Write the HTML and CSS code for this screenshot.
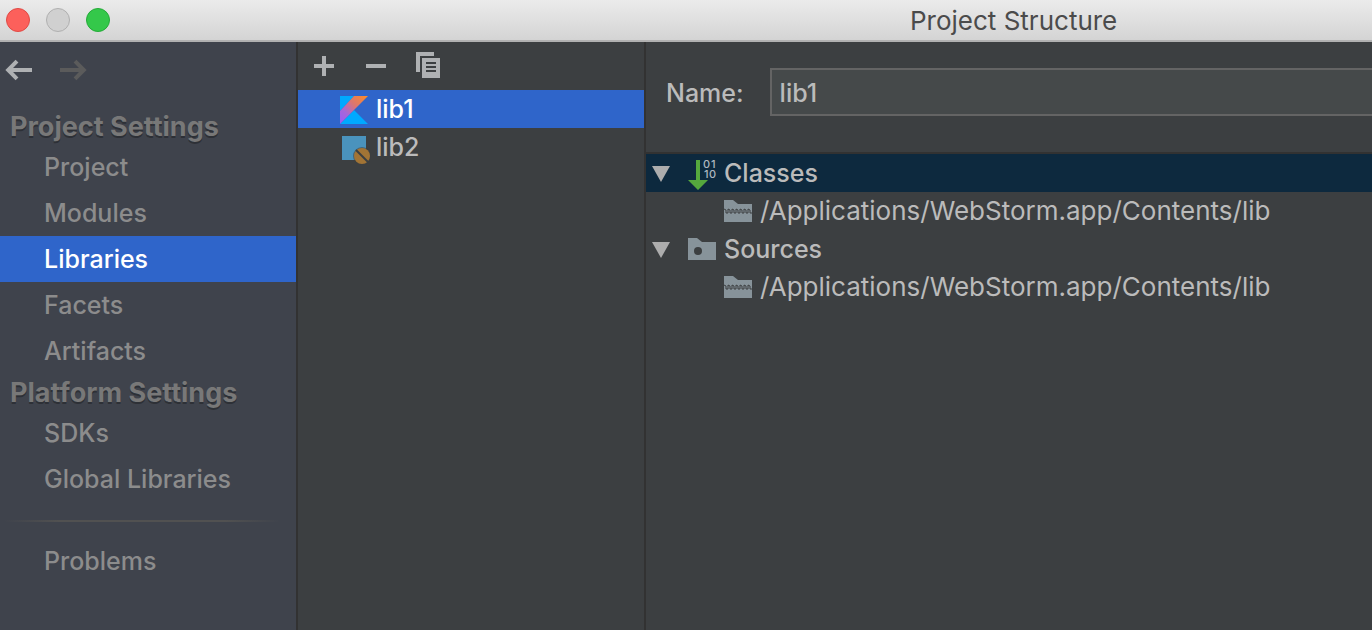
FILE: index.html
```html
<!DOCTYPE html>
<html lang="en">
<head>
<meta charset="utf-8">
<title>Project Structure</title>
<link rel="stylesheet" href="styles.css">
</head>
<body>
<header class="titlebar">
  <div class="lights">
    <button class="light light-close" aria-label="Close"></button>
    <button class="light light-minimize" aria-label="Minimize" disabled></button>
    <button class="light light-zoom" aria-label="Zoom"></button>
  </div>
  <h1 class="title">Project Structure</h1>
</header>
<main class="window">
  <nav class="sidebar">
    <div class="history">
      <button class="icon-button" aria-label="Back">
        <svg class="arrow" width="28" height="20" viewBox="0 0 28 20"><path d="M27 10H4M12 1.2L3.2 10l8.8 8.8"/></svg>
      </button>
      <button class="icon-button" aria-label="Forward" disabled>
        <svg class="arrow arrow-disabled" width="28" height="20" viewBox="0 0 28 20"><path d="M1 10h23M16 1.2l8.8 8.8-8.8 8.8"/></svg>
      </button>
    </div>
    <h2 class="group">Project Settings</h2>
    <a class="item" href="#project">Project</a>
    <a class="item" href="#modules">Modules</a>
    <a class="item item-selected" href="#libraries" aria-current="page">Libraries</a>
    <a class="item" href="#facets">Facets</a>
    <a class="item" href="#artifacts">Artifacts</a>
    <h2 class="group">Platform Settings</h2>
    <a class="item" href="#sdks">SDKs</a>
    <a class="item" href="#global-libraries">Global Libraries</a>
    <hr class="separator">
    <a class="item" href="#problems">Problems</a>
  </nav>
  <section class="libraries" aria-label="Libraries">
    <div class="toolbar">
      <button class="icon-button" aria-label="Add"><svg width="28" height="28" viewBox="0 0 28 28" fill="#afb1b3"><path d="M12 4h4v8h8v4h-8v8h-4v-8H4v-4h8z"/></svg></button>
      <button class="icon-button" aria-label="Remove"><svg width="28" height="28" viewBox="0 0 28 28" fill="#afb1b3"><path d="M4 12h20v4H4z"/></svg></button>
      <button class="icon-button" aria-label="Copy"><svg width="28" height="28" viewBox="0 0 28 28" fill="#afb1b3"><path d="M2 0h18v4H6v16H2z"/><path fill-rule="evenodd" d="M8 6h18v20H8zM12 10v2h10v-2zM12 14v2h10v-2zM12 18v2h10v-2z"/></svg></button>
    </div>
    <button class="library library-selected">
      <svg width="32" height="30" viewBox="0 0 32 30">
        <defs>
          <linearGradient id="kotlin-band" gradientUnits="userSpaceOnUse" x1="0" y1="28" x2="26" y2="2">
            <stop offset="0" stop-color="#9b5cf5"/><stop offset=".3" stop-color="#a767d8"/><stop offset=".6" stop-color="#db7572"/><stop offset="1" stop-color="#fb8b2c"/>
          </linearGradient>
        </defs>
        <path fill="#00a9ff" d="M0 2h14L0 17zM0 30l14-14 14 14z"/>
        <path fill="url(#kotlin-band)" d="M14 2h14L0 30V17z"/>
      </svg>
      <span>lib1</span>
    </button>
    <button class="library">
      <svg width="32" height="30" viewBox="0 0 32 30">
        <path fill="#4a93bd" d="M2 4h24v24H2z"/>
        <circle cx="22" cy="24" r="9" fill="#3c3f41" opacity=".55"/>
        <circle cx="22" cy="24" r="8" fill="#a27435"/>
        <path stroke="#3c3f41" stroke-width="2" d="M16 18l12 12"/>
      </svg>
      <span>lib2</span>
    </button>
  </section>
  <section class="details" aria-label="Library details">
    <div class="name-row">
      <label class="name-label" for="name">Name:</label>
      <input class="name-input" id="name" type="text" value="lib1">
    </div>
    <ul class="tree">
      <li>
        <div class="node node-selected">
          <svg class="toggle" width="18" height="14" viewBox="0 0 18 14"><path d="M0 0h18L9 16z"/></svg>
          <svg width="28" height="32" viewBox="0 0 28 32">
            <path fill="#55a83d" d="M8 3h4v20h8L10 33 0 23h8z"/>
            <text class="bits"><tspan x="15 23" y="11">01</tspan><tspan x="16 21" y="21">10</tspan></text>
          </svg>
          <span>Classes</span>
        </div>
        <ul class="branch">
          <li class="node node-leaf">
            <svg width="28" height="22" viewBox="0 0 28 22"><path fill="#87939a" d="M0 0h9l5 4h14v18H0z"/><path class="zip" d="M0 9l2 1v3l2 0V9l2 1v3l2 0V9l2 1v3l2 0V9l2 1v3l2 0V9l2 1v3l2 0V9l2 1v3l2 0V9l2 1v3l2 0"/></svg>
            <span class="path">/Applications/WebStorm.app/Contents/lib</span>
          </li>
        </ul>
      </li>
      <li>
        <div class="node">
          <svg class="toggle" width="18" height="14" viewBox="0 0 18 14"><path d="M0 0h18L9 16z"/></svg>
          <svg width="28" height="22" viewBox="0 0 28 22"><path fill="#87939a" d="M0 0h9l5 4h14v18H0z"/><circle cx="10" cy="13" r="4" fill="#3c3f41"/></svg>
          <span>Sources</span>
        </div>
        <ul class="branch">
          <li class="node node-leaf">
            <svg width="28" height="22" viewBox="0 0 28 22"><path fill="#87939a" d="M0 0h9l5 4h14v18H0z"/><path class="zip" d="M0 9l2 1v3l2 0V9l2 1v3l2 0V9l2 1v3l2 0V9l2 1v3l2 0V9l2 1v3l2 0V9l2 1v3l2 0V9l2 1v3l2 0"/></svg>
            <span class="path">/Applications/WebStorm.app/Contents/lib</span>
          </li>
        </ul>
      </li>
    </ul>
  </section>
</main>
</body>
</html>
```
FILE: styles.css
```css
* {
  box-sizing: border-box;
}

body {
  margin: 0;
  min-height: 100vh;
  display: flex;
  flex-direction: column;
  background: #3c3f41;
  color: #bbbbbb;
  font: 500 25px/38px Inter, Roboto, sans-serif;
}

button,
input {
  font: inherit;
  color: inherit;
}

button {
  padding: 0;
  border: 0;
  background: none;
}

svg {
  display: block;
  flex: none;
  overflow: visible;
}

.titlebar {
  display: flex;
  align-items: center;
  height: 42px;
  padding-left: 6px;
  border-bottom: 2px solid #b1b1b1;
  background: linear-gradient(#ebebeb, #d4d4d4);
}

.lights {
  display: flex;
  gap: 16px;
}

.light {
  width: 24px;
  height: 24px;
  border: 1px solid;
  border-radius: 50%;
}

.light-close {
  background: #fc605b;
  border-color: #e04a45;
}

.light-minimize {
  background: #d0d0d0;
  border-color: #b0b0b0;
}

.light-zoom {
  background: #34c84a;
  border-color: #24ab38;
}

.title {
  margin: 0 0 0 800px;
  padding-top: 2px;
  font-size: 26px;
  font-weight: 400;
  color: #4b4b4b;
  white-space: nowrap;
}

.window {
  flex: 1;
  display: flex;
}

.sidebar {
  flex: none;
  width: 298px;
  border-right: 2px solid #323232;
  background: #3f434c;
}

.history {
  display: flex;
  align-items: center;
  gap: 26px;
  height: 56px;
  padding-left: 5px;
  margin-bottom: 10px;
}

.arrow {
  fill: none;
  stroke: #afb1b3;
  stroke-width: 4;
}

.arrow-disabled {
  stroke: #5b5b5b;
}

.group {
  margin: 0;
  padding: 2px 0 0 10px;
  font-size: 27px;
  line-height: 34px;
  font-weight: 700;
  color: #787878;
  text-shadow: 0 2px 0 #2d3036;
}

.item {
  display: block;
  padding-left: 44px;
  line-height: 46px;
  color: #8c8c8c;
  text-decoration: none;
}

.item-selected {
  background: #2f65ca;
  color: #ffffff;
}

.separator {
  height: 2px;
  margin: 18px 16px 16px 4px;
  border: 0;
  background: linear-gradient(90deg, transparent, #515151 20%, #515151 80%, transparent);
}

.libraries {
  flex: none;
  width: 348px;
  border-right: 2px solid #323232;
}

.toolbar {
  display: flex;
  align-items: center;
  gap: 24px;
  height: 48px;
  padding-left: 12px;
}

.library {
  display: flex;
  align-items: center;
  gap: 4px;
  width: 100%;
  height: 38px;
  padding-left: 42px;
}

.library-selected {
  background: #2f65ca;
  color: #ffffff;
}

.details {
  flex: 1;
  min-width: 0;
}

.name-row {
  display: flex;
  align-items: center;
  gap: 26px;
  padding: 26px 0 36px 20px;
}

.name-label {
  padding-top: 2px;
}

.name-input {
  flex: 1;
  min-width: 0;
  height: 48px;
  padding: 2px 8px 0;
  border: 2px solid #646464;
  border-right: 0;
  border-radius: 0;
  background: #45494a;
  outline: 0;
}

.tree {
  margin: 0;
  padding: 0;
  border-top: 2px solid #323232;
  list-style: none;
}

.branch {
  margin: 0;
  padding: 0;
  list-style: none;
}

.node {
  display: flex;
  align-items: center;
  gap: 8px;
  height: 38px;
  padding-left: 6px;
  white-space: nowrap;
}

.node-selected {
  background: #0d293e;
}

.node-leaf {
  padding-left: 78px;
}

.path {
  font-size: 26px;
  font-weight: 400;
}

.toggle {
  margin-right: 10px;
  fill: #adadad;
}

.zip {
  fill: none;
  stroke: #3c3f41;
  stroke-width: 1;
}

.bits {
  font: 500 11px Inter, Roboto, sans-serif;
  fill: #afb8c0;
}
```
